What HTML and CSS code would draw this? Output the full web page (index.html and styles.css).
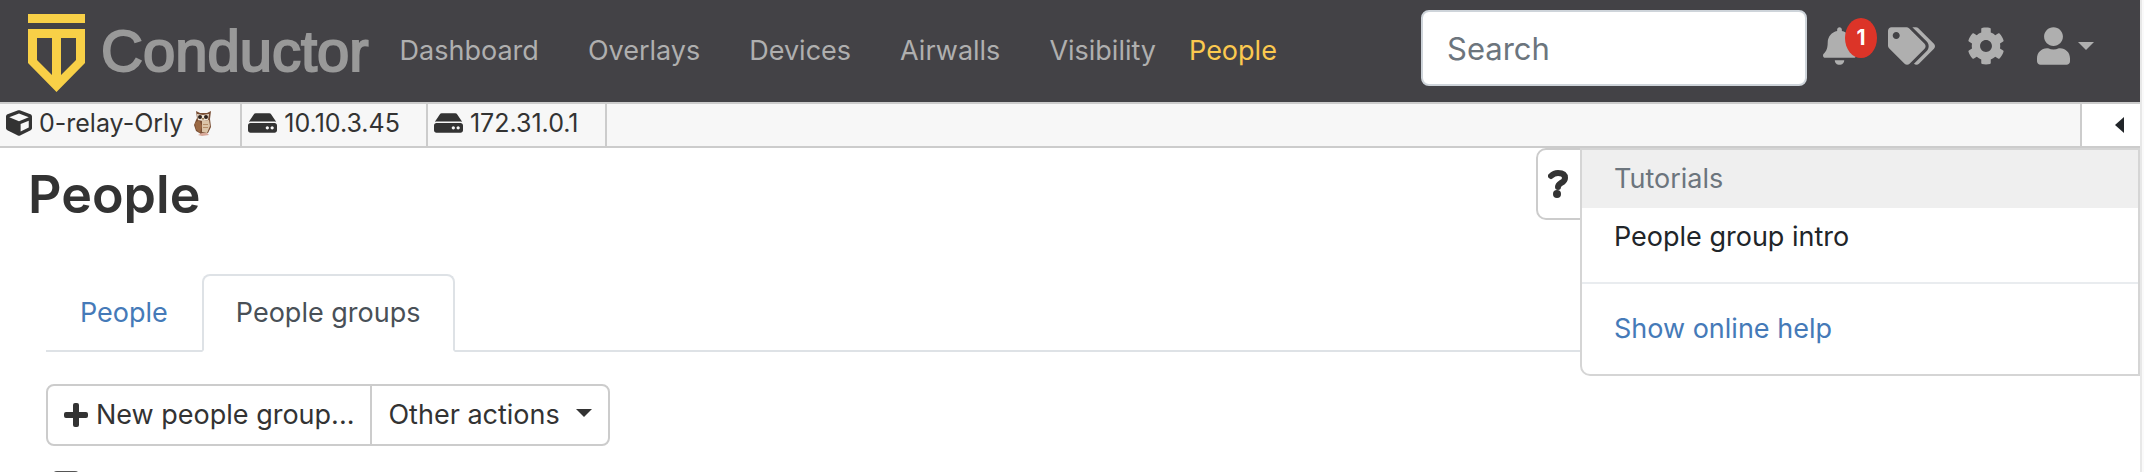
FILE: index.html
```html
<!DOCTYPE html>
<html lang="en">
<head>
<meta charset="utf-8">
<title>Conductor – People</title>
<link rel="stylesheet" href="styles.css">
</head>
<body>
<svg class="defs" aria-hidden="true">
  <symbol id="drive" viewBox="0 0 576 512"><path d="M576 304v96c0 26.500-21.500 48-48 48H48c-26.500 0-48-21.500-48-48v-96c0-26.500 21.500-48 48-48h480c26.500 0 48 21.500 48 48zm-48-80a79.600 79.600 0 0 1 30.800 6.200L462.300 85.400A48 48 0 0 0 422.300 64H153.700a48 48 0 0 0-40 21.400L17.200 230.200A79.600 79.600 0 0 1 48 224h480zm-48 96c-17.700 0-32 14.300-32 32s14.300 32 32 32 32-14.300 32-32-14.300-32-32-32zm-96 0c-17.700 0-32 14.300-32 32s14.300 32 32 32 32-14.300 32-32-14.300-32-32-32z"/></symbol>
</svg>
<header class="navbar">
  <a class="brand" href="#">
    <svg class="brand-mark" viewBox="0 0 57 78" aria-hidden="true"><path fill="#f8d047" fill-rule="evenodd" d="M0 0h57v9H0zM0 15h57v34L28.500 78 0 49zM9 24v22l15 15V24zM33 24v37l15-15V24z"/></svg>
    <span class="brand-name">Conductor</span>
  </a>
  <nav class="nav">
    <a href="#">Dashboard</a>
    <a href="#">Overlays</a>
    <a href="#">Devices</a>
    <a href="#">Airwalls</a>
    <a href="#">Visibility</a>
    <a class="active" href="#">People</a>
  </nav>
  <div class="tools">
    <input class="search" type="search" placeholder="Search" aria-label="Search">
    <button class="tool bell" aria-label="Notifications">
      <svg viewBox="0 0 448 512" width="33" height="38"><path d="M224 512c35.300 0 64-28.700 64-64H160c0 35.300 28.700 64 64 64zm215.400-149.700c-19.300-20.800-55.500-52-55.500-154.300 0-77.700-54.500-139.900-127.900-155.200V32c0-17.700-14.300-32-32-32s-32 14.300-32 32v20.800C118.600 68.100 64.100 130.300 64.100 208c0 102.300-36.200 133.500-55.500 154.300A31.300 31.300 0 0 0 0 384c.1 16.400 13 32 32.100 32h383.800c19.100 0 32-15.600 32.100-32a31.300 31.300 0 0 0-8.600-21.700z"/></svg>
      <span class="badge">1</span>
    </button>
    <button class="tool tags" aria-label="Tags">
      <svg viewBox="0 0 640 512" width="47" height="38"><path d="M497.900 225.900 286.100 14.100A48 48 0 0 0 252.100 0H48C21.500 0 0 21.500 0 48v204.100a48 48 0 0 0 14.100 33.900l211.800 211.900c18.700 18.700 49.100 18.700 67.900 0l204.100-204.100c18.800-18.700 18.800-49.100 0-67.900zM112 160c-26.500 0-48-21.500-48-48s21.500-48 48-48 48 21.500 48 48-21.500 48-48 48zm513.900 133.800L421.800 497.900c-18.700 18.700-49.100 18.700-67.900 0l-.4-.4 174.100-174c17-17 26.300-39.600 26.300-63.600s-9.400-46.600-26.300-63.600L331.400 0h48.700a48 48 0 0 1 33.900 14.100l211.900 211.800c18.700 18.800 18.700 49.200 0 67.900z"/></svg>
    </button>
    <button class="tool gear" aria-label="Settings">
      <svg viewBox="0 0 512 512" width="38" height="38"><path d="M487.400 315.700l-42.600-24.600c4.300-23.200 4.300-47 0-70.200l42.600-24.600c4.900-2.800 7.100-8.600 5.500-14-11.100-35.600-30-67.800-54.700-94.600-3.800-4.100-10-5.100-14.800-2.300L380.800 110c-17.900-15.400-38.500-27.300-60.800-35.100V25.800c0-5.600-3.900-10.500-9.400-11.700-36.700-8.200-74.300-7.800-109.200 0-5.500 1.200-9.400 6.100-9.400 11.700V75c-22.200 7.900-42.800 19.800-60.800 35.100L88.700 85.500c-4.900-2.800-11-1.900-14.800 2.300-24.700 26.700-43.600 58.900-54.700 94.600-1.700 5.400.6 11.200 5.500 14L67.300 221c-4.300 23.200-4.300 47 0 70.200l-42.600 24.600c-4.900 2.800-7.100 8.600-5.500 14 11.100 35.600 30 67.800 54.700 94.600 3.800 4.100 10 5.100 14.800 2.300l42.600-24.600c17.900 15.400 38.500 27.300 60.800 35.100v49.200c0 5.600 3.900 10.500 9.400 11.700 36.700 8.200 74.300 7.800 109.200 0 5.500-1.200 9.400-6.100 9.400-11.700v-49.200c22.200-7.900 42.800-19.800 60.800-35.100l42.600 24.600c4.900 2.800 11 1.900 14.800-2.300 24.700-26.700 43.600-58.900 54.700-94.600 1.500-5.500-.7-11.300-5.600-14.100zM256 336c-44.100 0-80-35.900-80-80s35.900-80 80-80 80 35.900 80 80-35.900 80-80 80z"/></svg>
    </button>
    <button class="tool user" aria-label="Account">
      <svg viewBox="0 0 448 512" width="33" height="38"><path d="M224 256c70.700 0 128-57.300 128-128S294.700 0 224 0 96 57.300 96 128s57.300 128 128 128zm89.600 32h-16.700a174 174 0 0 1-145.800 0h-16.700C60.200 288 0 348.200 0 422.400V464c0 26.500 21.500 48 48 48h352c26.500 0 48-21.500 48-48v-41.600c0-74.200-60.200-134.400-134.400-134.400z"/></svg>
      <svg viewBox="0 0 16 8" width="16" height="8"><path d="M0 0h16L8 8z"/></svg>
    </button>
  </div>
</header>
<div class="statusbar">
  <a class="status" href="#"><svg viewBox="0 0 512 512" width="26" height="26"><path d="M239.100 6.300l-208 78c-18.700 7-31.100 25-31.100 45v225.100c0 18.200 10.300 34.800 26.500 42.900l208 104c13.500 6.800 29.400 6.800 42.900 0l208-104c16.300-8.100 26.500-24.800 26.500-42.900V129.300c0-20-12.400-37.900-31.100-44.900l-208-78C262 2.200 250 2.200 239.100 6.300zM256 68.400l192 72v1.100l-192 78-192-78v-1.100l192-72zm32 356V275.500l160-65v133.900l-160 80z"/></svg><span>0-relay-Orly</span>
    <svg class="owl" viewBox="0 0 18 26" width="18" height="26"><path fill="#7a4f35" d="M2 1l4 2h7l4-2-1 8 1 8-3 6-7 1-5-3-2-6 2-5 1-2z"/><path fill="#9b6a45" d="M1 13l4-3 3 6-2 7-4-4z"/><path fill="#dcc5a8" d="M8 11l7-1 1 6-3 7-5-1z"/><path fill="#b58d68" d="M9 14h5v1H9zM9 17h5v1H9z"/><path fill="#efe4d4" d="M3 4l6 1 6-1-1 6-5 1-5-1z"/><circle cx="6" cy="7" r="2" fill="#30231c"/><circle cx="12" cy="7" r="2" fill="#30231c"/><path fill="#8f6b3c" d="M8 8h2l-1 3z"/><path fill="#d8a99a" d="M4 25l4-2 5 0 2 2-7 1z"/></svg></a>
  <a class="status" href="#"><svg width="29" height="26"><use href="#drive"/></svg><span>10.10.3.45</span></a>
  <a class="status" href="#"><svg width="29" height="26"><use href="#drive"/></svg><span>172.31.0.1</span></a>
  <button class="collapse" aria-label="Collapse"><svg viewBox="0 0 9 16" width="9" height="16"><path d="M9 0v16L0 8z"/></svg></button>
</div>
<main class="page">
  <h1>People</h1>
  <div class="content">
    <nav class="tabs">
      <a href="#">People</a>
      <a class="current" href="#">People groups</a>
    </nav>
    <div class="actions">
      <button><svg viewBox="0 0 24 24" width="24" height="24"><path d="M9 2q0-2 2-2h2q2 0 2 2v7h7q2 0 2 2v2q0 2-2 2h-7v7q0 2-2 2h-2q-2 0-2-2v-7H2q-2 0-2-2v-2q0-2 2-2h7z"/></svg>New people group...</button>
      <button>Other actions<svg class="caret" viewBox="0 0 16 8" width="16" height="8"><path d="M0 0h16L8 8z"/></svg></button>
    </div>
    <input class="row-check" type="checkbox" aria-label="Select all">
  </div>
  <aside class="help">
    <button class="help-toggle" aria-label="Help"><svg viewBox="0 0 20 28" width="20" height="28"><path fill="none" stroke="#333" stroke-width="6" stroke-linecap="round" stroke-linejoin="round" d="M3 6Q6 3 10 3q7 0 7 5 0 3-4 5-3 2-3 4"/><circle cx="9" cy="24" r="4"/></svg></button>
    <div class="help-panel">
      <h2>Tutorials</h2>
      <a class="tutorial" href="#">People group intro</a>
      <a class="online" href="#">Show online help</a>
    </div>
  </aside>
</main>
</body>
</html>
```
FILE: styles.css
```css
* { box-sizing: border-box; }
html { background: #fff; border-right: 2px solid #fafafa; }
body {
  margin: 0;
  height: 100vh;
  overflow: hidden;
  border-right: 2px solid #e8e8e8;
  font: 27px/42px Inter, "Noto Sans", sans-serif;
  color: #333;
}
a { color: inherit; text-decoration: none; }
button { font: inherit; color: inherit; background: none; border: 0; margin: 0; padding: 0; }
svg { fill: currentColor; flex: none; display: block; }
.defs { position: absolute; width: 0; height: 0; }

.navbar {
  display: flex;
  align-items: center;
  height: 102px;
  padding: 0 46px 0 28px;
  background: #434246;
  color: #afafaf;
}
.brand { display: flex; gap: 16px; align-items: center; }
.brand-mark { width: 57px; height: 78px; margin-top: 4px; }
.brand-name {
  font: 58px/70px "Liberation Sans", Arial, sans-serif;
  color: #999;
  -webkit-text-stroke: 2px #999;
}
.nav { display: flex; gap: 49px; margin-left: 31px; }
.nav .active { color: #fbc94f; margin-left: -16px; }
.tools { display: flex; align-items: center; margin-left: auto; }
.search {
  width: 386px;
  height: 76px;
  margin-right: 16px;
  margin-bottom: 6px;
  padding: 0 24px;
  border: 2px solid #ced4da;
  border-radius: 8px;
  background: #fff;
  font: 31px/48px Inter, sans-serif;
  color: #495057;
}
.search::placeholder { color: #6c757d; opacity: 1; }
.tool { display: flex; align-items: center; position: relative; margin-bottom: 10px; }
.badge {
  position: absolute;
  left: 22px;
  top: -9px;
  width: 32px;
  height: 40px;
  border-radius: 50%;
  background: #dc3428;
  color: #fff;
  font-size: 21px;
  font-weight: 700;
  line-height: 40px;
}
.tags { margin-left: 32px; }
.gear { margin-left: 32px; }
.user { margin-left: 32px; gap: 8px; }

.statusbar {
  display: flex;
  height: 46px;
  border: solid #ccc;
  border-width: 2px 0;
  background: #f7f7f7;
  font-size: 25px;
  line-height: 38px;
}
.status {
  display: flex;
  gap: 7px;
  padding: 0 26px 0 6px;
  border-right: 2px solid #ccc;
}
.status svg { margin-top: 6px; }
.status .owl { margin: 6px 2px 0 4px; }
.collapse {
  display: flex;
  align-items: center;
  justify-content: flex-end;
  width: 60px;
  margin-left: auto;
  padding-right: 16px;
  border-left: 2px solid #ccc;
  background: #fff;
  color: #212529;
}

.page { position: relative; padding-top: 14px; }
h1 { margin: 0 0 46px 28px; font-size: 52px; font-weight: 600; line-height: 66px; }
.content { padding-left: 46px; }
.tabs { display: flex; border-bottom: 2px solid #dee2e6; }
.tabs a {
  padding: 16px 32px;
  margin-bottom: -2px;
  border: 2px solid transparent;
  border-radius: 8px 8px 0 0;
  color: #457ab8;
}
.tabs .current { color: #495057; background: #fff; border-color: #dee2e6 #dee2e6 #fff; }
.actions { display: flex; margin-top: 32px; }
.actions button {
  display: flex;
  align-items: center;
  gap: 8px;
  height: 62px;
  padding: 0 16px;
  border: 2px solid #ccc;
  border-radius: 8px 0 0 8px;
  background: #fff;
}
.actions button + button { margin-left: -2px; gap: 16px; border-radius: 0 8px 8px 0; }
.actions .caret { margin-bottom: 4px; }
.row-check {
  appearance: none;
  display: block;
  width: 26px;
  height: 26px;
  margin: 25px 0 0 7px;
  border: 2px solid #555;
  border-radius: 4px;
  background: #fff;
}

.help { position: absolute; top: 0; right: 0; display: flex; align-items: flex-start; }
.help-toggle {
  display: flex;
  align-items: center;
  justify-content: center;
  width: 46px;
  height: 72px;
  margin-right: -2px;
  padding-right: 2px;
  border: 2px solid #ccc;
  border-radius: 10px 0 0 10px;
  background: #fff;
}
.help-panel {
  position: relative;
  width: 560px;
  border: 2px solid #d5d5d5;
  border-radius: 0 0 0 10px;
  background: #fff;
  overflow: hidden;
}
.help-panel h2 {
  margin: 0;
  padding: 8px 32px;
  background: #efefef;
  color: #6c757d;
  font-size: 27px;
  font-weight: 400;
}
.help-panel a { display: block; padding: 8px 32px; }
.help-panel .tutorial { padding-bottom: 24px; color: #212529; }
.help-panel .online { padding: 24px 32px; border-top: 2px solid #e9ecef; color: #457ab8; }
```
